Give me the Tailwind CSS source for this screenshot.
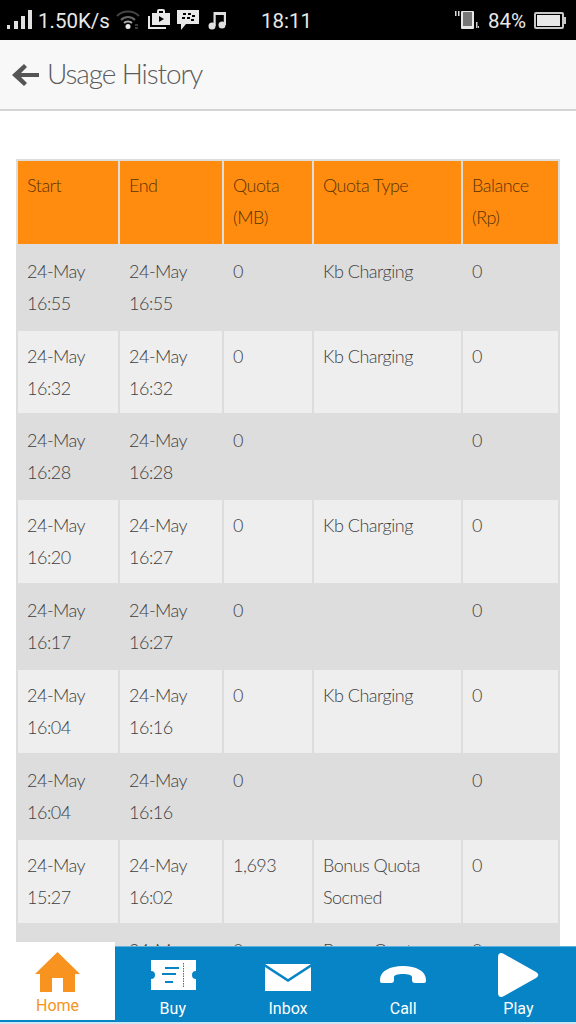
<!DOCTYPE html>
<html lang="en">
<head>
    <meta charset="UTF-8">
    <meta name="viewport" content="width=device-width, initial-scale=1.0">
    <title>Usage History</title>
    <script src="https://cdn.jsdelivr.net/npm/@tailwindcss/browser@4"></script>
</head>
<body class="bg-white h-[1024px] overflow-hidden relative font-['Lato',sans-serif] font-light text-[#333]">
    <!-- status bar -->
    <div class="bg-black h-10 flex items-center text-[#e8e8e8] font-['Roboto',sans-serif] font-normal relative">
        <svg class="ml-[7px]" width="25" height="20" viewBox="0 0 25 20" fill="#e0e0e0"><rect x="0" y="15" width="3" height="4"/><rect x="7" y="11" width="4" height="8"/><rect x="14" y="6" width="4" height="13"/><rect x="21" y="0" width="4" height="19"/></svg>
        <span class="ml-[6px] mt-[3px] text-[20.5px]">1.50K/s</span>
        <svg class="ml-[6px]" width="24" height="20" viewBox="0 0 24 20" fill="none" stroke-width="2"><path d="M1 6c6-6 16-6 22 0" stroke="#444"/><path d="M5 10c4-4 10-4 14 0" stroke="#666"/><path d="M8 13c2-2 6-2 8 0" stroke="#aaa"/><circle cx="12" cy="16.500" r="2.500" fill="#e8e8e8"/><path d="M19 15h3M19 18h3" stroke="#777" stroke-width="1"/></svg>
        <svg class="ml-[7px]" width="24" height="24" viewBox="0 0 24 24" fill="#e8e8e8"><path d="M1 8v13h18v-2H3V8z"/><path d="M5 5h5V3a2 2 0 0 1 2-2h4a2 2 0 0 1 2 2v2h5v12H5zM12 5h4V3h-4zM12 8v6l5-3z" fill-rule="evenodd"/></svg>
        <svg class="ml-[6px]" width="22" height="22" viewBox="0 0 22 22" fill="#e8e8e8"><path d="M0 1h22v14H9l-5 6v-6H0z"/><g fill="#000"><rect x="6" y="4" width="3" height="2"/><rect x="11" y="4" width="3" height="2"/><rect x="5" y="8" width="3" height="2"/><rect x="10" y="8" width="3" height="2"/><rect x="15" y="6" width="3" height="2"/><rect x="14" y="10" width="3" height="2"/></g></svg>
        <svg class="ml-[9px]" width="18" height="20" viewBox="0 0 18 20" fill="#e0e0e0"><circle cx="4" cy="16" r="3.500"/><circle cx="14" cy="15" r="3.500"/><path d="M5.500 2H18v13h-2.200V5H7.700v11H5.500z"/></svg>
        <span class="ml-[35px] mt-[3px] text-[20.5px]">18:11</span>
        <svg class="ml-[143px]" width="24" height="20" viewBox="0 0 24 20"><path d="M0 1h1.500v5H0zM3 1h1.500v5H3z" fill="#ddd"/><rect x="6" y="1" width="13" height="18" rx="1" fill="#e8e8e8"/><rect x="8" y="2" width="9" height="14" fill="#777"/><rect x="21" y="12" width="1.500" height="6" fill="#ccc"/><rect x="23" y="16" width="1" height="2" fill="#ccc"/></svg>
        <span class="ml-[9px] mt-[3px] text-[20.5px]">84%</span>
        <div class="ml-2 w-[30px] h-[17px] border-2 border-[#c8c8c8] rounded-[2px] p-[1px]"><div class="bg-[#e8e8e8] h-full w-[23px]"></div></div>
        <div class="w-[2px] h-[7px] bg-[#c8c8c8]"></div>
    </div>

    <!-- title bar -->
    <header class="bg-[#f8f8f8] h-[71px] border-b-2 border-[#d4d4d4] flex items-center">
        <svg class="ml-3" width="27" height="24" viewBox="0 0 27 24" fill="#555"><path d="M12 1l3 3-6 6h18v4H9l6 6-3 3L0 12z"/></svg>
        <h1 class="ml-2 mb-1 text-[28px] tracking-[-1.1px] leading-none font-light text-[#5c5c5c]">Usage History</h1>
    </header>

    <main class="pt-[48px] px-4">
        <table class="w-[542px] table-fixed border-collapse text-[18px] tracking-[-0.5px] leading-8 text-[#3f3f3f]">
            <colgroup>
                <col class="w-[102px]">
                <col class="w-[104px]">
                <col class="w-[90px]">
                <col class="w-[149px]">
                <col class="w-[97px]">
            </colgroup>
            <thead>
                <tr class="bg-[#ff8c0f] text-[#5a3305] h-[85px]">
                    <th class="border-2 border-[#ddd] px-[9px] pt-[8px] pb-[10px] align-top text-left font-light">Start</th>
                    <th class="border-2 border-[#ddd] px-[9px] pt-[8px] pb-[10px] align-top text-left font-light">End</th>
                    <th class="border-2 border-[#ddd] px-[9px] pt-[8px] pb-[10px] align-top text-left font-light">Quota (MB)</th>
                    <th class="border-2 border-[#ddd] px-[9px] pt-[8px] pb-[10px] align-top text-left font-light">Quota Type</th>
                    <th class="border-2 border-[#ddd] px-[9px] pt-[8px] pb-[10px] align-top text-left font-light">Balance (Rp)</th>
                </tr>
            </thead>
            <tbody>
                <tr class="bg-[#ddd] h-[85px]">
                    <td class="border-2 border-[#ddd] px-[9px] pt-[9px] align-top">24-May 16:55</td>
                    <td class="border-2 border-[#ddd] px-[9px] pt-[9px] align-top">24-May 16:55</td>
                    <td class="border-2 border-[#ddd] px-[9px] pt-[9px] align-top">0</td>
                    <td class="border-2 border-[#ddd] px-[9px] pt-[9px] align-top">Kb Charging</td>
                    <td class="border-2 border-[#ddd] px-[9px] pt-[9px] align-top">0</td>
                </tr>
                <tr class="bg-[#eee] h-[84px]">
                    <td class="border-2 border-[#ddd] px-[9px] pt-[9px] align-top">24-May 16:32</td>
                    <td class="border-2 border-[#ddd] px-[9px] pt-[9px] align-top">24-May 16:32</td>
                    <td class="border-2 border-[#ddd] px-[9px] pt-[9px] align-top">0</td>
                    <td class="border-2 border-[#ddd] px-[9px] pt-[9px] align-top">Kb Charging</td>
                    <td class="border-2 border-[#ddd] px-[9px] pt-[9px] align-top">0</td>
                </tr>
                <tr class="bg-[#ddd] h-[85px]">
                    <td class="border-2 border-[#ddd] px-[9px] pt-[9px] align-top">24-May 16:28</td>
                    <td class="border-2 border-[#ddd] px-[9px] pt-[9px] align-top">24-May 16:28</td>
                    <td class="border-2 border-[#ddd] px-[9px] pt-[9px] align-top">0</td>
                    <td class="border-2 border-[#ddd] px-[9px] pt-[9px] align-top"></td>
                    <td class="border-2 border-[#ddd] px-[9px] pt-[9px] align-top">0</td>
                </tr>
                <tr class="bg-[#eee] h-[85px]">
                    <td class="border-2 border-[#ddd] px-[9px] pt-[9px] align-top">24-May 16:20</td>
                    <td class="border-2 border-[#ddd] px-[9px] pt-[9px] align-top">24-May 16:27</td>
                    <td class="border-2 border-[#ddd] px-[9px] pt-[9px] align-top">0</td>
                    <td class="border-2 border-[#ddd] px-[9px] pt-[9px] align-top">Kb Charging</td>
                    <td class="border-2 border-[#ddd] px-[9px] pt-[9px] align-top">0</td>
                </tr>
                <tr class="bg-[#ddd] h-[85px]">
                    <td class="border-2 border-[#ddd] px-[9px] pt-[9px] align-top">24-May 16:17</td>
                    <td class="border-2 border-[#ddd] px-[9px] pt-[9px] align-top">24-May 16:27</td>
                    <td class="border-2 border-[#ddd] px-[9px] pt-[9px] align-top">0</td>
                    <td class="border-2 border-[#ddd] px-[9px] pt-[9px] align-top"></td>
                    <td class="border-2 border-[#ddd] px-[9px] pt-[9px] align-top">0</td>
                </tr>
                <tr class="bg-[#eee] h-[85px]">
                    <td class="border-2 border-[#ddd] px-[9px] pt-[9px] align-top">24-May 16:04</td>
                    <td class="border-2 border-[#ddd] px-[9px] pt-[9px] align-top">24-May 16:16</td>
                    <td class="border-2 border-[#ddd] px-[9px] pt-[9px] align-top">0</td>
                    <td class="border-2 border-[#ddd] px-[9px] pt-[9px] align-top">Kb Charging</td>
                    <td class="border-2 border-[#ddd] px-[9px] pt-[9px] align-top">0</td>
                </tr>
                <tr class="bg-[#ddd] h-[85px]">
                    <td class="border-2 border-[#ddd] px-[9px] pt-[9px] align-top">24-May 16:04</td>
                    <td class="border-2 border-[#ddd] px-[9px] pt-[9px] align-top">24-May 16:16</td>
                    <td class="border-2 border-[#ddd] px-[9px] pt-[9px] align-top">0</td>
                    <td class="border-2 border-[#ddd] px-[9px] pt-[9px] align-top"></td>
                    <td class="border-2 border-[#ddd] px-[9px] pt-[9px] align-top">0</td>
                </tr>
                <tr class="bg-[#eee] h-[85px]">
                    <td class="border-2 border-[#ddd] px-[9px] pt-[9px] align-top">24-May 15:27</td>
                    <td class="border-2 border-[#ddd] px-[9px] pt-[9px] align-top">24-May 16:02</td>
                    <td class="border-2 border-[#ddd] px-[9px] pt-[9px] align-top">1,693</td>
                    <td class="border-2 border-[#ddd] px-[9px] pt-[9px] align-top">Bonus Quota Socmed</td>
                    <td class="border-2 border-[#ddd] px-[9px] pt-[9px] align-top">0</td>
                </tr>
                <tr class="bg-[#ddd] h-[85px]">
                    <td class="border-2 border-[#ddd] px-[9px] pt-[9px] align-top">24-May 15:20</td>
                    <td class="border-2 border-[#ddd] px-[9px] pt-[9px] align-top">24-May 15:27</td>
                    <td class="border-2 border-[#ddd] px-[9px] pt-[9px] align-top">0</td>
                    <td class="border-2 border-[#ddd] px-[9px] pt-[9px] align-top">Bonus Quota Socmed</td>
                    <td class="border-2 border-[#ddd] px-[9px] pt-[9px] align-top">0</td>
                </tr>
            </tbody>
        </table>
    </main>

    <!-- bottom nav, sits over the table -->
    <nav class="absolute left-0 right-0 top-[946px] h-[76px] bg-[#0684c6] border-t border-[#5fb0dc] grid grid-cols-5 font-['Roboto',sans-serif] font-normal text-[16px] text-white">
        <a class="absolute left-0 top-[-5px] w-[115px] h-[78px] bg-white text-[#f7931e] flex flex-col items-center pt-[10px]">
            <svg width="45" height="40" viewBox="0 0 45 40" fill="#f7931e"><path d="M22.500 0L45 22h-5v18H28V26H17v14H5V22H0z"/></svg>
            <span class="mt-[4px] leading-5">Home</span>
        </a>
        <div></div>
        <a class="flex flex-col items-center pt-[13px]">
            <svg width="46" height="30" viewBox="0 0 46 30" fill="#fff"><path d="M1 0h45v11a4 4 0 0 0 0 8v11H1V19a4 4 0 0 0 0-8z"/><g fill="#0684c6"><rect x="15" y="7" width="14" height="2"/><rect x="12" y="13" width="14" height="2"/><rect x="15" y="21" width="8" height="2"/></g><path d="M33.500 3v24" stroke="#0684c6" stroke-width="1" stroke-dasharray="1.500 1"/></svg>
            <span class="mt-[9px] leading-5">Buy</span>
        </a>
        <a class="flex flex-col items-center pt-[17px]">
            <svg width="46" height="27" viewBox="0 0 46 27" fill="#fff"><path d="M0 0h46L23 15z"/><path d="M0 3l23 15L46 3v24H0z"/></svg>
            <span class="mt-[8px] leading-5">Inbox</span>
        </a>
        <a class="flex flex-col items-center pt-[19px]">
            <svg width="46" height="18" viewBox="0 0 46 18" fill="#fff"><path d="M0 14C0 5 10 0 23 0s23 5 23 14c0 3-1 3-3 3h-8c-2 0-3-1-3-3v-3c0-2-4-3-9-3s-9 1-9 3v3c0 2-1 3-3 3H3c-2 0-3 0-3-3z"/></svg>
            <span class="mt-[15px] leading-5">Call</span>
        </a>
        <a class="flex flex-col items-center pt-[5px]">
            <svg width="42" height="46" viewBox="0 0 42 46" fill="#fff"><path d="M1 5c0-4 3-5 6-3l32 18c3 2 3 4 0 6L7 44c-3 2-6 1-6-3z"/></svg>
            <span class="mt-[1px] leading-5">Play</span>
        </a>
    </nav>
    <div class="absolute left-0 right-0 top-[1022px] h-[2px] bg-[#cfe6f3]"></div>
</body>
</html>
